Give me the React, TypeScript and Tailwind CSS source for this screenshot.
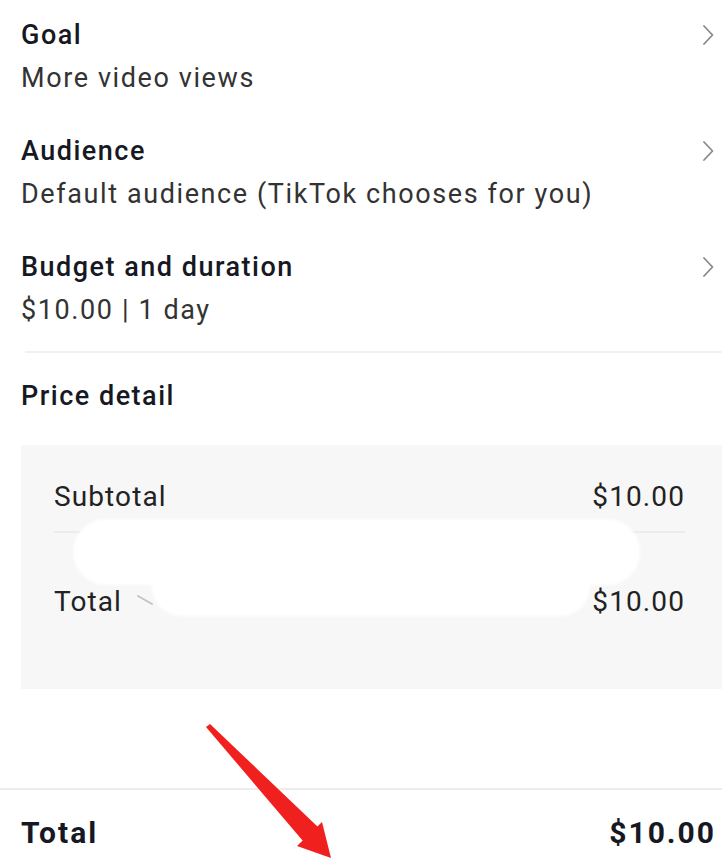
import React from "react";

const rows = [
  { title: "Goal", value: "More video views" },
  { title: "Audience", value: "Default audience (TikTok chooses for you)" },
  { title: "Budget and duration", value: "$10.00 | 1 day" },
];

function Chevron() {
  return (
    <svg width="12" height="22" viewBox="0 0 12 22" fill="none" className="shrink-0">
      <path d="M2 2l8.5 9L2 20" stroke="#8a8a8a" strokeWidth="1.8" strokeLinecap="round" strokeLinejoin="round" />
    </svg>
  );
}

export default function App() {
  return (
    <div className="relative w-[722px] h-[862px] overflow-hidden bg-white font-['Roboto',sans-serif] text-[#161823]">
      {/* promote settings */}
      <div className="flex flex-col gap-[37px] pt-[17px] pl-[21px] pr-[8px]">
        {rows.map((r) => (
          <div key={r.title} className="flex justify-between">
            <div className="flex flex-col gap-[7px]">
              <span className="text-[27px] leading-[36px] font-medium tracking-[1.5px]">{r.title}</span>
              <span className="text-[27px] leading-[36px] text-[#333] tracking-[1.6px]">{r.value}</span>
            </div>
            <div className="pt-[7px]">
              <Chevron />
            </div>
          </div>
        ))}
      </div>

      <div className="ml-[25px] mt-[23px] h-[2px] bg-[#f1f1f1]" />

      <div className="pl-[21px] mt-[25px] text-[27px] leading-[36px] font-medium tracking-[1.5px]">Price detail</div>

      {/* price box */}
      <div className="ml-[21px] mt-[31px] h-[244px] bg-[#f7f7f7] pl-[33px] pr-[37px] pt-[34px] text-[28px] text-[#222] tracking-[1.1px]">
        <div className="flex justify-between leading-[36px]">
          <span>Subtotal</span>
          <span>$10.00</span>
        </div>
        <div className="mt-[16px] h-[2px] bg-[#ececec]" />
        <div className="mt-[51px] flex justify-between leading-[36px]">
          <span>Total</span>
          <span>$10.00</span>
        </div>
      </div>

      <div className="mt-[99px] h-[2px] bg-[#ededed]" />
      <div className="flex justify-between pl-[21px] pr-[6px] pt-[24px] text-[30px] leading-[38px] font-bold tracking-[2px]">
        <span>Total</span>
        <span>$10.00</span>
      </div>

      {/* redaction smear */}
      <div className="absolute left-[73px] top-[519px] w-[567px] h-[66px] rounded-[33px] bg-white blur-[1.5px]" />
      <div className="absolute left-[152px] top-[558px] w-[438px] h-[58px] rounded-[29px] bg-white blur-[1.5px]" />

      {/* red annotation arrow */}
      <svg className="absolute left-0 top-0" width="722" height="862" viewBox="0 0 722 862">
        <line x1="138" y1="596" x2="152" y2="604" stroke="#c4c4c4" strokeWidth="2" strokeLinecap="round" />
        <polygon points="206,727 210,724 318,827 303,841" fill="#f0201e" />
        <polygon points="297,846 322,822 331,858" fill="#f0201e" />
      </svg>
    </div>
  );
}
